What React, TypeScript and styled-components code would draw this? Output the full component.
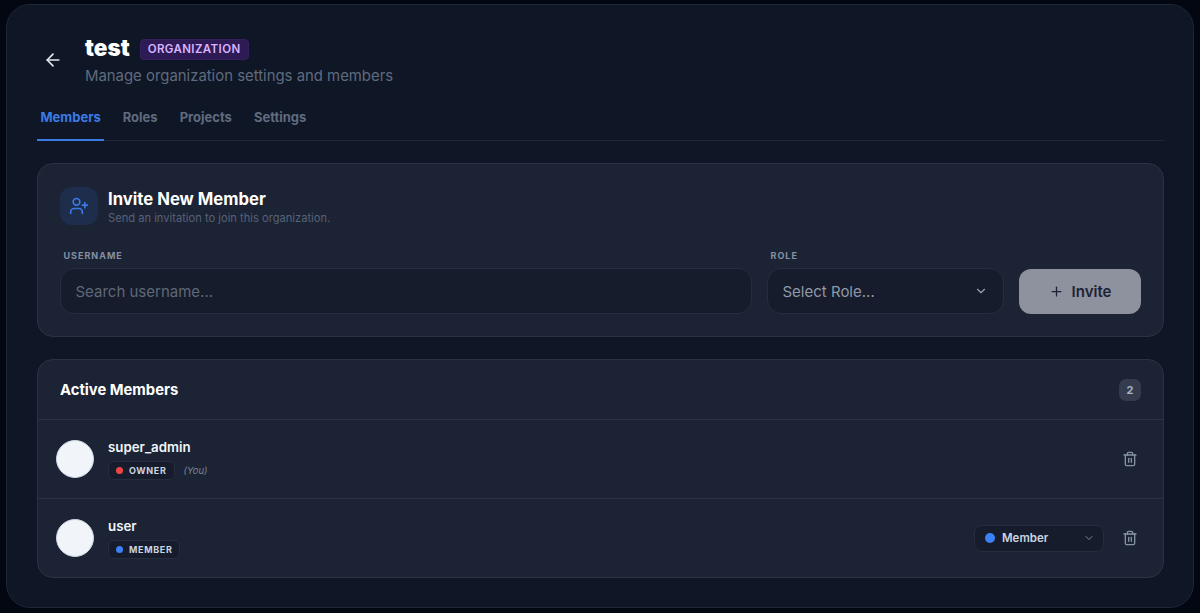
import styled, { createGlobalStyle } from "styled-components";
import { ArrowLeft, ChevronDown, Plus, Trash2, UserPlus } from "lucide-react";

const GlobalStyle = createGlobalStyle`
  * {
    box-sizing: border-box;
  }
  html, body {
    margin: 0;
    height: 100%;
    background: #030712;
    font-family: Inter, "Liberation Sans", sans-serif;
  }
`;

const Page = styled.div`
  height: 613px;
  padding: 4px 6px 5px 6px;
  overflow: hidden;
`;

const Panel = styled.main`
  height: 100%;
  padding: 27px 29px 0 30px;
  background: #0f1626;
  border: 1px solid #1e2637;
  border-radius: 24px;
`;

const Header = styled.header`
  display: flex;
  align-items: center;
  gap: 15px;
  padding-left: 6px;
  height: 55px;
`;

const BackButton = styled.button`
  display: flex;
  align-items: center;
  justify-content: center;
  width: 20px;
  height: 20px;
  margin: 0;
  padding: 0;
  color: #e2e8f0;
  background: none;
  border: 0;
`;

const HeaderText = styled.div`
  display: flex;
  flex-direction: column;
  gap: 3px;
  margin-left: 7px;
`;

const TitleRow = styled.div`
  display: flex;
  align-items: center;
  gap: 10px;
`;

const Title = styled.h1`
  margin: -1px 0 1px 0;
  color: #fff;
  font-size: 22.5px;
  line-height: 29px;
  font-weight: 900;
`;

const TypeBadge = styled.span`
  margin-top: 2px;
  padding: 0 7px;
  color: #d8b4fe;
  background: #2e1a55;
  border: 1px solid #35205f;
  border-radius: 4px;
  font-size: 11.5px;
  line-height: 19px;
  font-weight: 600;
  letter-spacing: 0.4px;
`;

const Subtitle = styled.p`
  margin: 0;
  color: #5f6b7e;
  font-size: 14.9px;
  line-height: 20px;
`;

const Tabs = styled.nav`
  display: flex;
  gap: 15px;
  height: 44px;
  margin-top: 10px;
  border-bottom: 1px solid #1e2637;
`;

const Tab = styled.a<{ $active?: boolean }>`
  height: 44px;
  padding: 0 3.5px;
  color: ${(p) => (p.$active ? "#3b7be6" : "#5f6b7e")};
  border-bottom: 2px solid ${(p) => (p.$active ? "#3b7be6" : "transparent")};
  font-size: 13px;
  line-height: 41px;
  font-weight: 700;
`;

const Card = styled.section`
  background: #1c2334;
  border: 1px solid #2a3244;
  border-radius: 16px;
`;

const InviteCard = styled(Card)`
  height: 174px;
  margin-top: 22px;
  padding: 23px 22px 0 22px;
`;

const InviteHead = styled.div`
  display: flex;
  align-items: flex-start;
  gap: 10px;
`;

const IconBox = styled.div`
  display: flex;
  align-items: center;
  justify-content: center;
  width: 38px;
  height: 38px;
  color: #3b7be6;
  background: #1e2d4b;
  border-radius: 12px;
`;

const CardTitle = styled.h2`
  margin: 1px 0 0 0;
  color: #fff;
  font-size: 16.7px;
  line-height: 22px;
  font-weight: 700;
`;

const CardHint = styled.p`
  margin: 1px 0 0 0;
  color: #566278;
  font-size: 11.15px;
  line-height: 15px;
`;

const InviteForm = styled.div`
  display: flex;
  align-items: flex-end;
  gap: 15px;
  margin-top: 24px;
`;

const Field = styled.label<{ $width: number }>`
  display: flex;
  flex-direction: column;
  gap: 7px;
  width: ${(p) => p.$width}px;
`;

const FieldLabel = styled.span`
  padding-left: 3.5px;
  color: #8590a2;
  font-size: 9px;
  line-height: 11px;
  font-weight: 700;
  letter-spacing: 1px;
`;

const FakeInput = styled.div`
  display: flex;
  align-items: center;
  justify-content: space-between;
  height: 46px;
  padding: 0 14px 0 14.5px;
  background: #161c2b;
  border: 1px solid #252d3e;
  border-radius: 14px;
  font-size: 15px;
`;

const Placeholder = styled.span`
  color: #5f6878;
`;

const SelectValue = styled.span`
  color: #8f98a8;
`;

const SelectCaret = styled.span`
  display: flex;
  margin-right: 1px;
  color: #94a3b8;
`;

const InviteButton = styled.button`
  display: flex;
  align-items: center;
  justify-content: center;
  gap: 8px;
  width: 122px;
  height: 45px;
  padding: 0;
  color: #1c2334;
  background: #8e919e;
  border: 0;
  border-radius: 12px;
  font-family: inherit;
  font-size: 15px;
  font-weight: 600;
`;

const MembersCard = styled(Card)`
  margin-top: 22px;
  height: 219px;
`;

const MembersHead = styled.div`
  display: flex;
  align-items: center;
  justify-content: space-between;
  height: 59px;
  padding: 0 22px;
`;

const MembersTitle = styled.h2`
  margin: 0;
  color: #fff;
  font-size: 14.8px;
  font-weight: 700;
`;

const CountBadge = styled.span`
  width: 22px;
  height: 22px;
  color: #a9b4c4;
  background: #343c4d;
  border-radius: 7px;
  font-size: 11px;
  line-height: 22px;
  font-weight: 700;
  text-align: center;
`;

const MemberRow = styled.div`
  display: flex;
  align-items: center;
  height: 79px;
  padding: 0 25px 0 17.5px;
  border-top: 1px solid #2a3244;
`;

const Avatar = styled.div`
  flex: none;
  width: 38px;
  height: 38px;
  background: #f1f5f9;
  border: 1px solid #cbd5e1;
  border-radius: 50%;
`;

const MemberInfo = styled.div`
  display: flex;
  flex-direction: column;
  gap: 6px;
  margin-left: 14.5px;
  margin-top: 1px;
`;

const MemberName = styled.span`
  color: #f1f5f9;
  font-size: 13.3px;
  line-height: 16px;
  font-weight: 600;
`;

const BadgeRow = styled.div`
  display: flex;
  align-items: center;
  gap: 9px;
`;

const RoleBadge = styled.span`
  display: flex;
  align-items: center;
  gap: 6px;
  height: 19px;
  padding: 0 7px;
  color: #cbd5e1;
  background: #161c2b;
  border: 1px solid #252d3e;
  border-radius: 6px;
  font-size: 9px;
  font-weight: 700;
  letter-spacing: 0.65px;
`;

const Dot = styled.span<{ $color: string; $size: number }>`
  flex: none;
  width: ${(p) => p.$size}px;
  height: ${(p) => p.$size}px;
  background: ${(p) => p.$color};
  border-radius: 50%;
`;

const YouTag = styled.span`
  color: #7b879b;
  font-size: 9.5px;
  font-style: italic;
`;

const RowActions = styled.div`
  display: flex;
  align-items: center;
  gap: 18px;
  margin-left: auto;
`;

const RoleSelect = styled.div`
  display: flex;
  align-items: center;
  gap: 7px;
  width: 130px;
  height: 27px;
  padding: 0 8px 0 10px;
  color: #cbd5e1;
  background: #161c2b;
  border: 1px solid #252d3e;
  border-radius: 8px;
  font-size: 11.5px;
  font-weight: 600;
`;

const RoleSelectCaret = styled.span`
  display: flex;
  margin-left: auto;
  color: #7c8aa0;
`;

const DeleteButton = styled.button`
  display: flex;
  width: 16px;
  height: 16px;
  padding: 0;
  color: #8592a6;
  background: none;
  border: 0;
`;

const members = [
  { name: "super_admin", role: "OWNER", color: "#ef4444", you: true },
  { name: "user", role: "MEMBER", color: "#3b82f6", you: false },
];

const tabs = ["Members", "Roles", "Projects", "Settings"];

const App = () => {
  return (
    <>
      <GlobalStyle />
      <Page>
        <Panel>
          <Header>
            <BackButton>
              <ArrowLeft size={20} />
            </BackButton>
            <HeaderText>
              <TitleRow>
                <Title>test</Title>
                <TypeBadge>ORGANIZATION</TypeBadge>
              </TitleRow>
              <Subtitle>Manage organization settings and members</Subtitle>
            </HeaderText>
          </Header>

          <Tabs>
            {tabs.map((tab, idx) => (
              <Tab key={tab} $active={idx === 0}>
                {tab}
              </Tab>
            ))}
          </Tabs>

          <InviteCard>
            <InviteHead>
              <IconBox>
                <UserPlus size={20} />
              </IconBox>
              <div>
                <CardTitle>Invite New Member</CardTitle>
                <CardHint>Send an invitation to join this organization.</CardHint>
              </div>
            </InviteHead>
            <InviteForm>
              <Field $width={692}>
                <FieldLabel>USERNAME</FieldLabel>
                <FakeInput>
                  <Placeholder>Search username...</Placeholder>
                </FakeInput>
              </Field>
              <Field $width={237}>
                <FieldLabel>ROLE</FieldLabel>
                <FakeInput>
                  <SelectValue>Select Role...</SelectValue>
                  <SelectCaret>
                    <ChevronDown size={14} />
                  </SelectCaret>
                </FakeInput>
              </Field>
              <InviteButton>
                <Plus size={15} />
                Invite
              </InviteButton>
            </InviteForm>
          </InviteCard>

          <MembersCard>
            <MembersHead>
              <MembersTitle>Active Members</MembersTitle>
              <CountBadge>2</CountBadge>
            </MembersHead>
            {members.map((member) => (
              <MemberRow key={member.name}>
                <Avatar />
                <MemberInfo>
                  <MemberName>{member.name}</MemberName>
                  <BadgeRow>
                    <RoleBadge>
                      <Dot $color={member.color} $size={7} />
                      {member.role}
                    </RoleBadge>
                    {member.you && <YouTag>(You)</YouTag>}
                  </BadgeRow>
                </MemberInfo>
                <RowActions>
                  {!member.you && (
                    <RoleSelect>
                      <Dot $color="#3b82f6" $size={10} />
                      Member
                      <RoleSelectCaret>
                        <ChevronDown size={12} />
                      </RoleSelectCaret>
                    </RoleSelect>
                  )}
                  <DeleteButton>
                    <Trash2 size={16} />
                  </DeleteButton>
                </RowActions>
              </MemberRow>
            ))}
          </MembersCard>
        </Panel>
      </Page>
    </>
  );
};

export default App;
